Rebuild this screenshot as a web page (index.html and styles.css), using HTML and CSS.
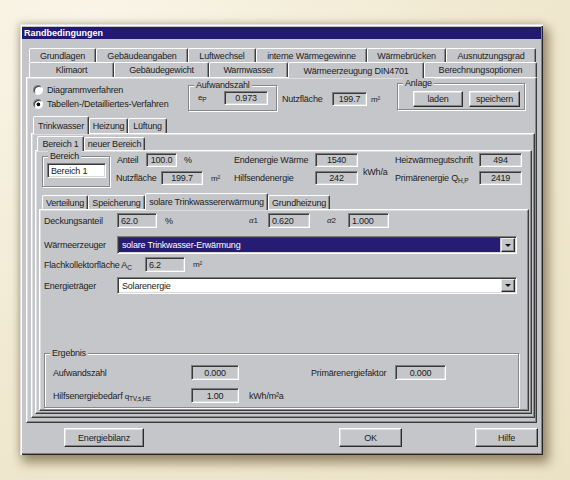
FILE: index.html
```html
<!DOCTYPE html>
<html lang="de">
<head>
<meta charset="utf-8">
<title>Randbedingungen</title>
<link rel="stylesheet" href="styles.css">
</head>
<body>
<div class="dialog">
  <div class="titlebar">Randbedingungen</div>

  <div class="tabs-main">
    <div class="tabrow mrow1">
      <span class="tab w-grund">Grundlagen</span>
      <span class="tab w-geb">Gebäudeangaben</span>
      <span class="tab w-luft">Luftwechsel</span>
      <span class="tab w-intern">interne Wärmegewinne</span>
      <span class="tab w-brueck">Wärmebrücken</span>
      <span class="tab w-ausn">Ausnutzungsgrad</span>
    </div>
    <div class="tabrow mrow2">
      <span class="tab w-klima">Klimaort</span>
      <span class="tab w-gew">Gebäudegewicht</span>
      <span class="tab w-warm">Warmwasser</span>
      <span class="tab sel w-erz">Wärmeerzeugung DIN4701</span>
      <span class="tab w-ber">Berechnungsoptionen</span>
    </div>
  </div>

  <div class="panel p1">
    <div class="p1top">
      <div class="radios">
        <div class="radio-line"><span class="radio"></span>Diagrammverfahren</div>
        <div class="radio-line"><span class="radio on"></span>Tabellen-/Detailliertes-Verfahren</div>
      </div>
      <div class="grp g-aufw">
        <span class="legend">Aufwandszahl</span>
        <span class="lbl l-ep small">e<sub>P</sub></span>
        <span class="fld f-ep">0.973</span>
      </div>
      <div class="nutz">
        <span class="lbl l-nutz1">Nutzfläche</span>
        <span class="fld f-nutz1">199.7</span>
        <span class="unit u-m2a">m²</span>
      </div>
      <div class="grp g-anlage">
        <span class="legend">Anlage</span>
        <span class="btn b-laden">laden</span>
        <span class="btn b-speichern">speichern</span>
      </div>
    </div>

    <div class="tabrow tr2">
      <span class="tab sel w-trink">Trinkwasser</span>
      <span class="tab w-heiz">Heizung</span>
      <span class="tab w-lueft">Lüftung</span>
    </div>

    <div class="panel p2">
      <div class="tabrow tr3">
        <span class="tab sel w-ber1">Bereich 1</span>
        <span class="tab w-neu">neuer Bereich</span>
      </div>

      <div class="panel p3">
        <div class="p3top">
          <div class="grp g-bereich">
            <span class="legend">Bereich</span>
            <span class="fld white left f-bereich">Bereich 1</span>
          </div>
          <div class="col col-b">
            <div class="line">
              <span class="lbl l-anteil">Anteil</span>
              <span class="fld f-anteil">100.0</span>
              <span class="unit u-pct">%</span>
            </div>
            <div class="line">
              <span class="lbl l-nutz2">Nutzfläche</span>
              <span class="fld f-nutz2">199.7</span>
              <span class="unit u-m2b">m²</span>
            </div>
          </div>
          <div class="col col-c">
            <div class="line">
              <span class="lbl l-end">Endenergie Wärme</span>
              <span class="fld f-mid">1540</span>
            </div>
            <div class="line">
              <span class="lbl l-end">Hilfsendenergie</span>
              <span class="fld f-mid">242</span>
            </div>
          </div>
          <div class="kwh">kWh/a</div>
          <div class="col col-e">
            <div class="line">
              <span class="lbl l-heiz">Heizwärmegutschrift</span>
              <span class="fld f-mid">494</span>
            </div>
            <div class="line">
              <span class="lbl l-heiz">Primärenergie Q<sub>H,P</sub></span>
              <span class="fld f-mid">2419</span>
            </div>
          </div>
        </div>

        <div class="tabrow tr4">
          <span class="tab w-vert">Verteilung</span>
          <span class="tab w-speich">Speicherung</span>
          <span class="tab sel w-solar">solare Trinkwassererwärmung</span>
          <span class="tab w-grundh">Grundheizung</span>
        </div>

        <div class="panel p4">
          <div class="row r-deck">
            <span class="lbl l-p4">Deckungsanteil</span>
            <span class="fld left f-deck">62.0</span>
            <span class="unit u-pct2">%</span>
            <span class="lbl l-a1 small"><i>α</i>1</span>
            <span class="fld left f-a1">0.620</span>
            <span class="lbl l-a2 small"><i>α</i>2</span>
            <span class="fld left f-a2">1.000</span>
          </div>
          <div class="row r-erz">
            <span class="lbl l-p4">Wärmeerzeuger</span>
            <div class="combo">
              <span class="combo-val selected">solare Trinkwasser-Erwärmung</span>
              <span class="combo-btn"><span class="arrow"></span></span>
            </div>
          </div>
          <div class="row r-flach">
            <span class="lbl l-flach">Flachkollektorfläche A<sub>C</sub></span>
            <span class="fld left f-flach">6.2</span>
            <span class="unit u-m2c">m²</span>
          </div>
          <div class="row r-energ">
            <span class="lbl l-p4">Energieträger</span>
            <div class="combo">
              <span class="combo-val white">Solarenergie</span>
              <span class="combo-btn"><span class="arrow"></span></span>
            </div>
          </div>
          <div class="grp g-erg">
            <span class="legend">Ergebnis</span>
            <div class="row r-erg1">
              <span class="lbl l-erg">Aufwandszahl</span>
              <span class="fld f-erg">0.000</span>
              <span class="lbl l-pf">Primärenergiefaktor</span>
              <span class="fld f-pf">0.000</span>
            </div>
            <div class="row r-erg2">
              <span class="lbl l-erg">Hilfsenergiebedarf <span class="small">q<sub>TV,s,HE</sub></span></span>
              <span class="fld f-erg">1.00</span>
              <span class="unit u-kwhm">kWh/m²a</span>
            </div>
          </div>
        </div>
      </div>
    </div>
  </div>

  <div class="btnrow">
    <span class="btn b-bilanz">Energiebilanz</span>
    <span class="btn b-ok">OK</span>
    <span class="btn b-hilfe">Hilfe</span>
  </div>
</div>
</body>
</html>
```

FILE: styles.css
```css
html, body {
  margin: 0;
  padding: 0;
}
body {
  width: 570px;
  height: 480px;
  overflow: hidden;
  background: radial-gradient(ellipse at 15% 5%, #f9f5e8 0%, #f1e9d1 55%, #ebe2c6 100%);
  font-family: "Liberation Sans", Arial, sans-serif;
  font-size: 9px;
  letter-spacing: -0.2px;
  color: #1c1c1c;
}

/* dialog frame */
.dialog {
  box-sizing: border-box;
  margin: 24px 0 0 20px;
  width: 523px;
  height: 431px;
  background: #c5c6ca;
  box-shadow:
    inset 1px 1px 0 #e2e2e2,
    inset 2px 2px 0 #ffffff,
    inset -1px -1px 0 #262626,
    inset -2px -2px 0 #808080,
    4px 6px 10px 2px rgba(85, 70, 35, 0.55),
    -1px -1px 6px rgba(120, 100, 60, 0.25);
  display: flex;
  flex-direction: column;
  align-items: flex-start;
}
.titlebar {
  box-sizing: border-box;
  margin: 3px 0 0 2px;
  width: 519px;
  height: 12px;
  padding-left: 2px;
  background: #211a70;
  color: #fff;
  font-weight: bold;
  letter-spacing: 0;
  line-height: 12px;
}

/* tabs */
.tabrow {
  display: flex;
  align-items: flex-end;
}
.tab {
  box-sizing: border-box;
  display: flex;
  align-items: center;
  justify-content: center;
  white-space: nowrap;
  background: #c5c6ca;
  border: 1px solid;
  border-bottom: none;
  border-color: #ffffff #3c3c3c transparent #ffffff;
  border-radius: 2px 2px 0 0;
  box-shadow: inset -1px 0 0 #8a8a8a;
}
.tab.sel {
  position: relative;
  z-index: 2;
  margin-bottom: -1px;
}
.tabs-main {
  margin: 9px 0 0 9px;
}
.mrow1 { height: 14px; }
.mrow1 .tab { height: 14px; }
.mrow2 { height: 15px; }
.mrow2 .tab { height: 15px; }
.mrow2 .tab.sel { height: 16px; }

.w-grund { width: 67px; }
.w-geb { width: 92px; }
.w-luft { width: 68px; }
.w-intern { width: 111px; }
.w-brueck { width: 79px; }
.w-ausn { width: 90px; }
.w-klima { width: 85px; }
.w-gew { width: 95px; }
.w-warm { width: 79px; }
.w-erz { width: 136px; }
.w-ber { width: 113px; }

.tr2 { margin-left: 6px; height: 17px; }
.tr2 .tab { height: 15px; }
.tr2 .tab.sel { height: 18px; }
.w-trink { width: 56px; }
.w-heiz { width: 39px; }
.w-lueft { width: 39px; }

.tr3 { margin: 2px 0 0 5px; height: 14px; }
.tr3 .tab { height: 13px; }
.tr3 .tab.sel { height: 15px; }
.w-ber1 { width: 47px; }
.w-neu { width: 61px; }

.tr4 { margin-left: 6px; height: 16px; }
.tr4 .tab { height: 14px; }
.tr4 .tab.sel { height: 17px; }
.w-vert { width: 46px; }
.w-speich { width: 57px; }
.w-solar { width: 123px; }
.w-grundh { width: 62px; }

/* panels */
.panel {
  box-sizing: border-box;
  background: #c5c6ca;
  border: 1px solid;
  border-color: #ffffff #3c3c3c #3c3c3c #ffffff;
  box-shadow: inset -1px -1px 0 #8a8a8a, inset 1px 1px 0 #dedede;
}
.p1 { margin-left: 6px; width: 511px; height: 346px; }
.p2 { margin-left: 4px; width: 504px; height: 285px; }
.p3 { margin-left: 3px; width: 497px; height: 264px; }
.p4 { margin-left: 3px; width: 490px; height: 202px; }

/* group boxes */
.grp {
  box-sizing: border-box;
  position: relative;
  border: 1px solid #878787;
  box-shadow: 1px 1px 0 #ffffff, inset 1px 1px 0 #ffffff;
}
.legend {
  position: absolute;
  top: -6px;
  left: 5px;
  padding: 0 2px;
  line-height: 10px;
  background: #c5c6ca;
  white-space: nowrap;
}

/* fields */
.fld {
  box-sizing: border-box;
  display: flex;
  align-items: center;
  justify-content: center;
  height: 14px;
  white-space: nowrap;
  background: #c5c6ca;
  border: 1px solid;
  border-color: #7c7c7c #ffffff #ffffff #7c7c7c;
  box-shadow: inset 1px 1px 0 #3a3a3a, inset -1px -1px 0 #d9d9d9;
}
.fld.left { justify-content: flex-start; padding-left: 3px; }
.fld.white { background: #ffffff; }

.lbl { white-space: nowrap; flex: none; }
.unit { white-space: nowrap; flex: none; }
.small { font-size: 8px; }
sub { font-size: 6.5px; vertical-align: -2px; line-height: 0; }

/* buttons */
.btn {
  box-sizing: border-box;
  display: flex;
  align-items: center;
  justify-content: center;
  background: #c5c6ca;
  border: 1px solid;
  border-color: #ffffff #2a2a2a #2a2a2a #ffffff;
  box-shadow: inset -1px -1px 0 #868686, inset 1px 1px 0 #e0e0e0;
  white-space: nowrap;
}

/* radios */
.radios { margin: 5px 0 0 6px; width: 155px; flex: none; }
.radio-line { display: flex; align-items: center; height: 14px; }
.radio {
  box-sizing: border-box;
  width: 10px;
  height: 10px;
  margin-right: 4px;
  border-radius: 50%;
  background: #ffffff;
  border: 1px solid;
  border-color: #7c7c7c #ffffff #ffffff #7c7c7c;
  box-shadow: inset 1px 1px 0 #3a3a3a;
}
.radio.on {
  background: radial-gradient(circle at 55% 55%, #111 0, #111 1.6px, #fff 2.2px);
}

/* top area of panel 1 */
.p1top { display: flex; height: 38px; align-items: flex-start; }
.g-aufw {
  margin-top: 7px;
  width: 89px;
  height: 26px;
  flex: none;
  display: flex;
  align-items: flex-start;
  padding: 5px 0 0 8px;
}
.l-ep { width: 26px; line-height: 14px; padding-left: 1px; }
.f-ep { width: 44px; height: 14px; }
.nutz {
  margin: 14px 0 0 5px;
  width: 115px;
  height: 14px;
  flex: none;
  display: flex;
  align-items: center;
}
.l-nutz1 { width: 50px; }
.f-nutz1 { width: 35px; }
.u-m2a { margin-left: 4px; font-size: 8px; }
.g-anlage {
  margin-top: 5px;
  width: 128px;
  height: 27px;
  flex: none;
  display: flex;
  align-items: flex-start;
  gap: 6px;
  padding: 7px 0 0 15px;
}
.b-laden { width: 50px; height: 16px; }
.b-speichern { width: 51px; height: 16px; }

/* panel 3 top */
.p3top { display: flex; height: 42px; align-items: flex-start; }
.g-bereich {
  margin: 5px 0 0 6px;
  width: 68px;
  height: 31px;
  flex: none;
  padding: 6px 0 0 4px;
}
.f-bereich { width: 59px; height: 15px; }
.col { display: flex; flex-direction: column; gap: 4px; margin-top: 2px; flex: none; }
.line { display: flex; align-items: center; height: 14px; }
.col-b { margin-left: 6px; width: 114px; }
.l-anteil { width: 29px; margin-left: 1px; }
.f-anteil { width: 31px; }
.u-pct { margin-left: 7px; }
.l-nutz2 { width: 45px; }
.f-nutz2 { width: 42px; }
.u-m2b { margin-left: 8px; font-size: 8px; }
.col-c { margin-left: 4px; }
.l-end { width: 81px; }
.f-mid { width: 43px; }
.kwh { margin: 14px 0 0 5px; width: 32px; height: 14px; line-height: 14px; flex: none; }
.l-heiz { width: 84px; }

/* panel 4 */
.row { display: flex; align-items: center; }
.r-deck { margin-top: 3px; height: 15px; }
.l-p4 { margin-left: 4px; width: 73px; }
.f-deck { width: 40px; height: 15px; }
.u-pct2 { margin-left: 8px; width: 10px; }
.l-a1 { margin-left: 74px; width: 19px; }
.f-a1 { width: 42px; height: 15px; }
.l-a2 { margin-left: 17px; width: 21px; }
.f-a2 { width: 41px; height: 15px; }

.r-erz { margin-top: 8px; height: 18px; }
.r-flach { margin-top: 3px; height: 15px; }
.l-flach { margin-left: 4px; width: 101px; }
.f-flach { width: 40px; height: 15px; }
.u-m2c { margin-left: 8px; font-size: 8px; }
.r-energ { margin-top: 5px; height: 17px; }

.combo {
  box-sizing: border-box;
  width: 400px;
  height: 100%;
  display: flex;
  border: 1px solid;
  border-color: #7c7c7c #ffffff #ffffff #7c7c7c;
  box-shadow: inset 1px 1px 0 #3a3a3a, inset -1px -1px 0 #d9d9d9;
  padding: 1px;
}
.combo-val {
  flex: 1;
  display: flex;
  align-items: center;
  padding-left: 3px;
}
.combo-val.selected { background: #261c74; color: #ffffff; margin-right: 1px; }
.combo-val.white { background: #ffffff; }
.combo-btn {
  box-sizing: border-box;
  width: 14px;
  display: flex;
  align-items: center;
  justify-content: center;
  background: #c5c6ca;
  border: 1px solid;
  border-color: #ececec #2a2a2a #2a2a2a #ececec;
  box-shadow: inset -1px -1px 0 #868686;
}
.arrow {
  width: 0;
  height: 0;
  border-left: 3px solid transparent;
  border-right: 3px solid transparent;
  border-top: 3px solid #111;
}

.g-erg {
  margin: 59px 0 0 4px;
  width: 475px;
  height: 55px;
  padding-top: 11px;
  display: flex;
  flex-direction: column;
  gap: 8px;
}
.r-erg1, .r-erg2 { height: 15px; }
.l-erg { margin-left: 8px; width: 138px; }
.f-erg { width: 48px; height: 15px; }
.l-pf { margin-left: 72px; width: 84px; }
.f-pf { width: 51px; height: 15px; }
.u-kwhm { margin-left: 10px; }

/* bottom buttons */
.btnrow {
  margin-top: 5px;
  display: flex;
  height: 19px;
  padding-left: 44px;
}
.b-bilanz { width: 80px; height: 19px; }
.b-ok { margin-left: 195px; width: 63px; height: 19px; }
.b-hilfe { margin-left: 73px; width: 63px; height: 19px; }
```
